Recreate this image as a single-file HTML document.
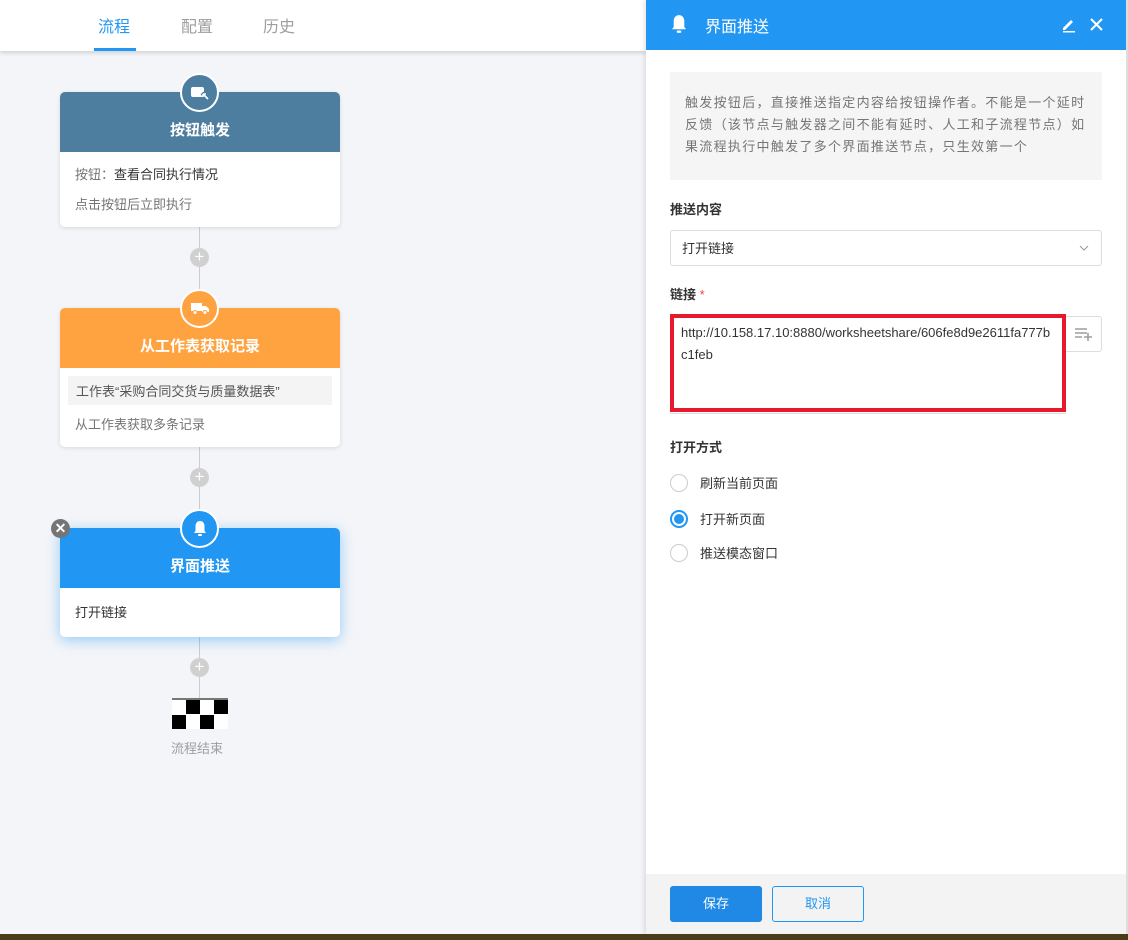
<!DOCTYPE html>
<html><head><meta charset="utf-8"><style>
*{box-sizing:border-box;margin:0;padding:0}
body{width:1128px;height:940px;position:relative;overflow:hidden;background:#f4f5f9;font-family:"Liberation Sans","Noto Sans CJK SC",sans-serif;font-size:13px;color:#333}
.abs{position:absolute}
.top{left:0;top:0;width:646px;height:51px;background:#fff;box-shadow:0 2px 4px rgba(0,0,0,.15)}
.tab{position:absolute;top:13px;font-size:16px;color:#9e9e9e}
.line{position:absolute;left:199px;width:1px;background:#ccc}
.card{position:absolute;left:60px;width:280px;background:#fff;border-radius:5px;box-shadow:0 1px 4px rgba(0,0,0,.12);overflow:visible}
.hd{height:60px;border-radius:5px 5px 0 0;color:#fff;font-weight:bold;font-size:15px;text-align:center;padding-top:27px}
.ic{position:absolute;left:120px;top:-19px;width:39px;height:39px;border-radius:50%;border:2px solid #fff;display:flex;align-items:center;justify-content:center}
.plus{position:absolute;left:190px;width:19px;height:19px;border-radius:50%;background:#d0d0d0;color:#fff;text-align:center;line-height:18px;font-size:17px}
.panel{left:646px;top:0;width:480px;height:934px;background:#fff;box-shadow:-2px 0 4px rgba(0,0,0,.1)}
.lbl{position:absolute;left:24px;font-weight:bold;font-size:13px;color:#333}
.radio{position:absolute;left:24px;width:18px;height:18px;border-radius:50%;border:1px solid #ccc}
.rt{position:absolute;left:54px;font-size:13px;color:#333}
</style></head><body>
<div class="abs top">
<div class="tab" style="left:98px;color:#2196f3">流程</div>
<div class="abs" style="left:94px;top:48px;width:42px;height:3px;background:#2196f3"></div>
<div class="tab" style="left:181px">配置</div>
<div class="tab" style="left:263px">历史</div>
</div>

<div class="line" style="top:227px;height:81px"></div>
<div class="line" style="top:447px;height:81px"></div>
<div class="line" style="top:637px;height:62px"></div>
<div class="plus" style="top:248px">+</div>
<div class="plus" style="top:468px">+</div>
<div class="plus" style="top:658px">+</div>

<div class="card" style="top:92px;height:135px">
<div class="hd" style="background:#4d7ea0">按钮触发</div>
<div class="ic" style="background:#4d7ea0"><svg width="18" height="14" viewBox="0 0 18 14"><rect x="0" y="1" width="13" height="10" rx="2" fill="#fff"/><path d="M11 7l6 6" stroke="#4d7ea0" stroke-width="4"/><path d="M12 8l5 5M12 8h3M12 8v3" stroke="#fff" stroke-width="1.6" fill="none"/></svg></div>
<div class="abs" style="left:15px;top:72px;color:#757575">按钮：<span style="color:#333">查看合同执行情况</span></div>
<div class="abs" style="left:15px;top:102px;color:#757575">点击按钮后立即执行</div>
</div>

<div class="card" style="top:308px;height:139px">
<div class="hd" style="background:#ffa340">从工作表获取记录</div>
<div class="ic" style="background:#ffa340"><svg width="18" height="13" viewBox="0 0 18 13"><rect x="0" y="1" width="11" height="8" fill="#fff"/><path d="M11 4h4l3 3v3h-7z" fill="#fff"/><circle cx="4" cy="10.5" r="2" fill="#fff" stroke="#ffa340"/><circle cx="14" cy="10.5" r="2" fill="#fff" stroke="#ffa340"/></svg></div>
<div class="abs" style="left:8px;top:68px;width:264px;height:29px;background:#f4f4f4;color:#555;padding:5px 0 0 8px">工作表“采购合同交货与质量数据表”</div>
<div class="abs" style="left:15px;top:106px;color:#757575">从工作表获取多条记录</div>
</div>

<div class="card" style="top:528px;height:109px;box-shadow:0 3px 14px rgba(33,150,243,.45)">
<div class="hd" style="background:#2196f3">界面推送</div>
<div class="ic" style="background:#2196f3"><svg width="14" height="17" viewBox="0 0 14 17"><path d="M7 1C4 1 2.5 3.5 2.5 6v5L1 13h12l-1.5-2V6C11.5 3.5 10 1 7 1z" fill="#fff"/><rect x="5" y="14" width="4" height="2" rx="1" fill="#fff"/></svg></div>
<div class="abs" style="left:15px;top:74px;color:#333">打开链接</div>
<div class="abs" style="left:-9px;top:-9px;width:19px;height:19px;border-radius:50%;background:#757575;color:#fff;font-size:14px;font-weight:bold;text-align:center;line-height:18px">✕</div>
</div>

<div class="abs" style="left:172px;top:698px;width:56px;height:2px;background:#777"></div>
<svg class="abs" style="left:172px;top:700px" width="56" height="29"><rect width="56" height="29" fill="#fff"/><rect x="14" y="0" width="14" height="14"/><rect x="42" y="0" width="14" height="14"/><rect x="0" y="15" width="14" height="14"/><rect x="28" y="15" width="14" height="14"/></svg>
<div class="abs" style="left:171px;top:738px;color:#9e9e9e">流程结束</div>

<div class="abs panel">
<div class="abs" style="left:0;top:0;width:480px;height:50px;background:#2196f3;color:#fff">
<svg class="abs" style="left:24px;top:14px" width="18" height="20" viewBox="0 0 14 17"><path d="M7 1C4 1 2.5 3.5 2.5 6v5L1 13h12l-1.5-2V6C11.5 3.5 10 1 7 1z" fill="#fff"/><rect x="5" y="14" width="4" height="2" rx="1" fill="#fff"/></svg>
<div class="abs" style="left:59px;top:13px;font-size:16px">界面推送</div>
<svg class="abs" style="left:415px;top:17px" width="16" height="16" viewBox="0 0 16 16"><path d="M2 11l8-8 2 2-8 8H2z" fill="#fff"/><rect x="2" y="14" width="12" height="1.5" fill="#fff"/></svg>
<svg class="abs" style="left:444px;top:18px" width="13" height="13"><path d="M1 1l11 11M12 1L1 12" stroke="#fff" stroke-width="2"/></svg>
</div>
<div class="abs" style="left:24px;top:72px;width:432px;height:108px;background:#f5f5f5;color:#757575;line-height:22px;padding:20px 6px 0 15px;letter-spacing:1.3px">触发按钮后，直接推送指定内容给按钮操作者。不能是一个延时反馈（该节点与触发器之间不能有延时、人工和子流程节点）如果流程执行中触发了多个界面推送节点，只生效第一个</div>
<div class="lbl" style="top:199px">推送内容</div>
<div class="abs" style="left:24px;top:230px;width:432px;height:36px;border:1px solid #ddd;border-radius:3px;padding:7px 0 0 11px">打开链接
<svg class="abs" style="right:12px;top:14px" width="10" height="6"><path d="M1 1l4 4 4-4" stroke="#999" fill="none"/></svg></div>
<div class="lbl" style="top:284px">链接 <span style="color:#f44336;font-weight:normal">*</span></div>
<div class="abs" style="left:24px;top:314px;width:396px;height:100px;border-bottom:1px solid #ddd"></div>
<div class="abs" style="left:24px;top:314px;width:396px;height:98px;border:4px solid #e8192c;padding:4px 7px;font-size:13px;line-height:22px;color:#333;word-break:break-all">http://10.158.17.10:8880/worksheetshare/606fe8d9e2611fa777bc1feb</div>
<div class="abs" style="left:420px;top:316px;width:36px;height:36px;border:1px solid #ddd;border-left:none;border-radius:0 3px 3px 0">
<svg class="abs" style="left:9px;top:11px" width="17" height="13"><path d="M0 1h12M0 5h12M0 9h7M9 9h8M13 5v8" stroke="#9e9e9e" stroke-width="1.6"/></svg></div>
<div class="lbl" style="top:437px">打开方式</div>
<div class="radio" style="top:474px"></div><div class="rt" style="top:473px">刷新当前页面</div>
<div class="radio" style="top:510px;border:2px solid #2196f3"><div style="margin:2px;width:10px;height:10px;border-radius:50%;background:#2196f3"></div></div><div class="rt" style="top:509px">打开新页面</div>
<div class="radio" style="top:544px"></div><div class="rt" style="top:543px">推送模态窗口</div>
<div class="abs" style="left:0;top:874px;width:480px;height:60px;background:#f3f3f3">
<div class="abs" style="left:24px;top:12px;width:92px;height:36px;background:#2089e6;border-radius:3px;color:#fff;text-align:center;line-height:36px">保存</div>
<div class="abs" style="left:126px;top:12px;width:92px;height:36px;border:1px solid #2196f3;border-radius:3px;color:#2196f3;text-align:center;line-height:34px">取消</div>
</div>
</div>
<div class="abs" style="left:1126px;top:0;width:2px;height:934px;background:#ddd"></div>
<div class="abs" style="left:0;top:934px;width:1128px;height:6px;background:#4a3c17"></div>
</body></html>
